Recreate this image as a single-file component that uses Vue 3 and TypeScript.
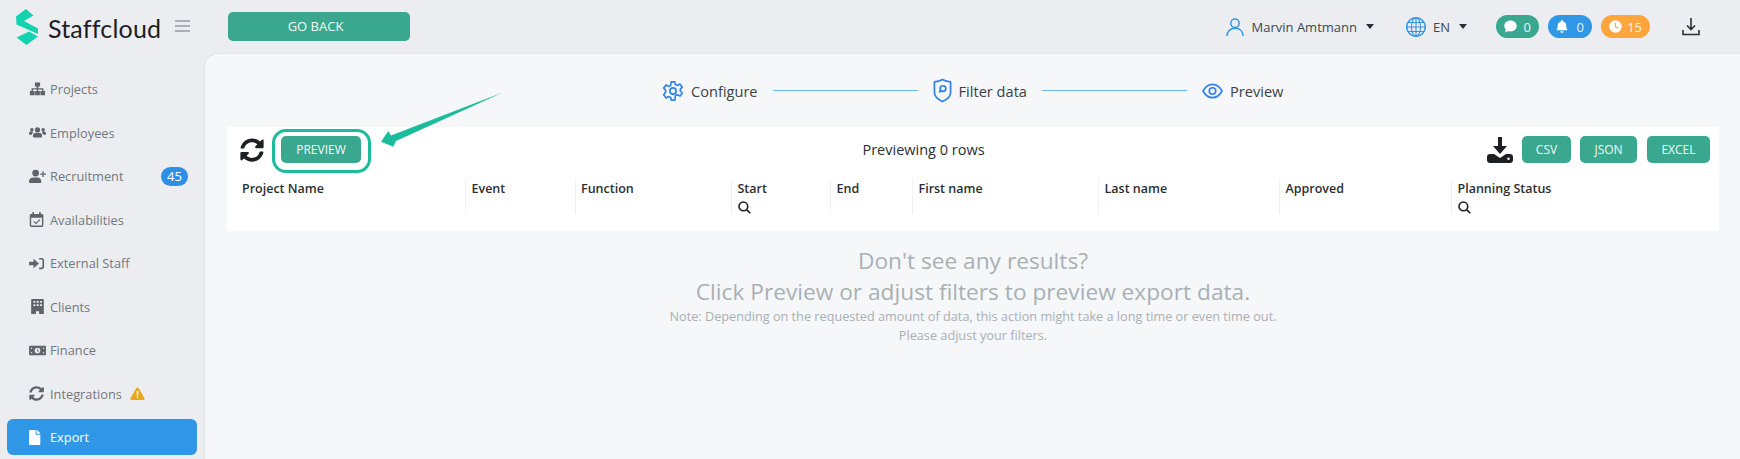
<script setup lang="ts">
interface NavItem {
  label: string;
  path: string;
  active?: boolean;
}

const syncPath =
  "M370.72 133.28C339.458 104.008 298.888 87.962 255.848 88c-77.458.068-144.328 53.178-162.791 126.85-1.344 5.363-6.122 9.15-11.651 9.15H24.103c-7.498 0-13.194-6.807-11.807-14.176C33.933 94.924 134.813 8 256 8c66.448 0 126.791 26.136 171.315 68.685L463.03 40.97C478.149 25.851 504 36.559 504 57.941V192c0 13.255-10.745 24-24 24H345.941c-21.382 0-32.09-25.851-16.971-40.971l41.75-41.749zM32 296h134.059c21.382 0 32.09 25.851 16.971 40.971l-41.75 41.75c31.262 29.273 71.835 45.319 114.876 45.28 77.418-.07 144.315-53.144 162.787-126.849 1.344-5.363 6.122-9.15 11.651-9.15h57.304c7.498 0 13.194 6.807 11.807 14.176C478.067 417.076 377.187 504 256 504c-66.448 0-126.791-26.136-171.315-68.685L48.97 471.03C33.851 486.149 8 475.441 8 454.059V320c0-13.255 10.745-24 24-24z";

const navItems: NavItem[] = [
  { label: "Projects", path: "M200 20h176v130h-58v66h172v90h56v146H386V306h60v-46H310v46h60v146H206V306h60v-46H130v46h60v146H28V306h56v-90h172v-66h-56z" },
  { label: "Employees", path: "M96 224a60 60 0 1 1 0-120 60 60 0 0 1 0 120zm384 0a60 60 0 1 1 0-120 60 60 0 0 1 0 120zM288 256a88 88 0 1 1 0-176 88 88 0 0 1 0 176zM140 244c-28 22-44 52-48 92H20c-12 0-20-8-20-20v-36c0-34 26-62 60-62h44c14 0 26 8 36 26zm296 0c10-18 22-26 36-26h44c34 0 60 28 60 62v36c0 12-8 20-20 20h-72c-4-40-20-70-48-92zM210 276h156c44 0 76 32 76 74v42c0 20-16 36-36 36H170c-20 0-36-16-36-36v-42c0-42 32-74 76-74z" },
  { label: "Recruitment", path: "M224 256a116 116 0 1 1 0-232 116 116 0 0 1 0 232zm-60 32h120c76 0 132 58 132 132v28c0 18-14 32-32 32H32c-18 0-32-14-32-32v-28c0-74 56-132 164-132zM500 150h76v44h-76v76h-44v-76h-76v-44h76V74h44z" },
  { label: "Availabilities", path: "M112 0h56v64h176V0h56v64h40c26 0 48 22 48 48v352c0 26-22 48-48 48H72c-26 0-48-22-48-48V112c0-26 22-48 48-48h40zM72 192v272h368V192zm284 52 28 28-150 148-86-86 28-28 58 58z" },
  { label: "External Staff", path: "M344 64h88c44 0 80 36 80 80v224c0 44-36 80-80 80h-88v-56h88c14 0 24-10 24-24V144c0-14-10-24-24-24h-88zM16 200h136V96l184 160-184 160V312H16c-9 0-16-7-16-16v-80c0-9 7-16 16-16z" },
  { label: "Clients", path: "M104 0h368c18 0 32 14 32 32v480H344v-96h-112v96H72V32c0-18 14-32 32-32zm48 64v64h64V64zm112 0v64h64V64zm112 0v64h64V64zM152 176v64h64v-64zm112 0v64h64v-64zm112 0v64h64v-64z" },
  { label: "Finance", path: "M24 96h528c13 0 24 11 24 24v272c0 13-11 24-24 24H24c-13 0-24-11-24-24V120c0-13 11-24 24-24zm264 64a96 96 0 1 0 0 192 96 96 0 0 0 0-192zm-12 40h24v64h40v24h-64zM64 160v48c26 0 48-22 48-48zm400 0c0 26 22 48 48 48v-48zM64 304v48h48c0-26-22-48-48-48zm448 0c-26 0-48 22-48 48h48z" },
  { label: "Integrations", path: syncPath },
  { label: "Export", active: true, path: "M224 0v136c0 13 11 24 24 24h136v328c0 13-11 24-24 24H24c-13 0-24-11-24-24V24C0 11 11 0 24 0zm160 122v6H256V0h6c6 0 12 3 17 7l98 98c4 5 7 11 7 17z" },
];

const columns = [
  { label: "Project Name" },
  { label: "Event" },
  { label: "Function" },
  { label: "Start", search: true },
  { label: "End" },
  { label: "First name" },
  { label: "Last name" },
  { label: "Approved" },
  { label: "Planning Status", search: true },
];
</script>

<template>
  <div class="app">
    <header class="topbar">
      <div class="brand">
        <svg class="logo" viewBox="0 0 22 36" width="22" height="36">
          <path d="M0 7.500 10 0l7.500 6.500L8 12l14 7.500V25L.5 15.500z" fill="#12d3ae" />
          <path d="M.5 28.500 13 22.500l9 5L10.500 36z" fill="#12d3ae" />
        </svg>
        <span class="brand-name">Staffcloud</span>
        <span class="burger"><i></i><i></i><i></i></span>
      </div>
      <button class="btn go-back">GO BACK</button>

      <div class="top-right">
        <svg class="user-icon" viewBox="0 0 18 18" width="18" height="18" fill="none" stroke="#2f97e6" stroke-width="1.5">
          <circle cx="9" cy="5.200" r="4.200" />
          <path d="M1 18c0-4.500 3-7.800 8-7.800s8 3.300 8 7.800" />
        </svg>
        <span class="top-label user-name">Marvin Amtmann</span>
        <span class="caret"></span>
        <svg class="globe" viewBox="0 0 20 20" width="20" height="20" fill="none" stroke="#2f97e6" stroke-width="1.1">
          <circle cx="10" cy="10" r="9.300" stroke-width="1.500" />
          <ellipse cx="10" cy="10" rx="4.500" ry="9.300" />
          <path d="M10 1v18M1 10h18M2 5.500h16M2 14.500h16" />
        </svg>
        <span class="top-label lang">EN</span>
        <span class="caret"></span>

        <span class="pill pill-green">
          <svg viewBox="0 0 12 12" width="13" height="13"><path d="M6 .5c3.200 0 5.700 2.200 5.700 5s-2.500 5-5.700 5c-.8 0-1.500-.1-2.200-.4L1 11.500l.7-2.600C.8 8 .3 6.800.3 5.500c0-2.800 2.500-5 5.700-5z" fill="#fff" /></svg>
          0
        </span>
        <span class="pill pill-blue">
          <svg viewBox="0 0 12 13" width="12" height="13"><path d="M6 0c.6 0 1 .4 1 1v.6c2 .4 3.300 2 3.300 4 0 3 .7 3.900 1.400 4.700H.3C1 9.500 1.700 8.600 1.700 5.600c0-2 1.300-3.600 3.300-4V1c0-.6.400-1 1-1zM4.400 11.200h3.200c0 1-.7 1.700-1.600 1.700s-1.600-.7-1.600-1.700z" fill="#fff" /></svg>
          0
        </span>
        <span class="pill pill-orange">
          <svg viewBox="0 0 13 13" width="13" height="13"><circle cx="6.500" cy="6.500" r="6.200" fill="#fff" /><path d="M6.500 3v3.800l2.500 1.400" fill="none" stroke="#ffa53d" stroke-width="1.200" /></svg>
          15
        </span>

        <svg class="top-download" viewBox="0 0 18 18" width="18" height="18" fill="none" stroke="#2b2f33" stroke-width="1.600">
          <path d="M9 0v11M5 7.500l4 4 4-4M1 12v4.500h16V12" />
        </svg>
      </div>
    </header>

    <div class="layout">
      <nav class="sidebar">
        <a v-for="item in navItems" :key="item.label" class="nav-item" :class="{ active: item.active }">
          <span class="nav-icon">
            <svg viewBox="0 0 576 512" width="17" height="15" fill="currentColor"><path :d="item.path" /></svg>
          </span>
          <span>{{ item.label }}</span>
          <span v-if="item.label === 'Recruitment'" class="count">45</span>
          <svg v-if="item.label === 'Integrations'" class="warn" viewBox="0 0 16 14" width="15" height="13">
            <path d="M8 .5c.5 0 .9.300 1.200.7l6.400 10.900c.5.900-.1 1.900-1.200 1.900H1.600c-1.100 0-1.700-1-1.200-1.900L6.800 1.200C7.100.8 7.500.5 8 .5z" fill="#e9a820" />
            <rect x="7.200" y="4.300" width="1.600" height="5" fill="#fff" />
            <rect x="7.200" y="10.200" width="1.600" height="1.600" fill="#fff" />
          </svg>
        </a>
      </nav>

      <main class="main">
        <div class="stepper">
          <svg viewBox="0 0 24 24" width="22" height="24" fill="none" stroke="#2f80ed" stroke-width="1.800" stroke-linejoin="round">
            <circle cx="12" cy="12" r="3.400" />
            <path d="M10 2h4l.6 3 2.300 1 2.600-1.600 2.700 3.400-2.200 2.200v2l2.200 2.200-2.700 3.400-2.600-1.600-2.300 1L14 22h-4l-.6-3-2.300-1-2.600 1.600-2.700-3.400L4 13v-2L1.800 8.800l2.700-3.400L7.100 7l2.300-1z" />
          </svg>
          <span class="step-label">Configure</span>
          <span class="step-line"></span>
          <svg viewBox="0 0 20 26" width="19" height="25" fill="none" stroke="#2f80ed" stroke-width="1.800" stroke-linejoin="round">
            <path d="M10 1.500c2.500 1.500 5.500 2.300 8.500 2.500v11c0 4-4 7.500-8.500 9.500-4.500-2-8.500-5.500-8.500-9.500V4c3-.2 6-1 8.500-2.500z" />
            <circle cx="10.500" cy="11" r="3" />
            <path d="M8.300 13.200 6.500 15" />
          </svg>
          <span class="step-label">Filter data</span>
          <span class="step-line"></span>
          <svg viewBox="0 0 22 16" width="21" height="16" fill="none" stroke="#2f80ed" stroke-width="1.700">
            <path d="M1 8c2.500-4.500 6-7 10-7s7.500 2.500 10 7c-2.500 4.500-6 7-10 7S3.500 12.500 1 8z" />
            <circle cx="11" cy="8" r="3.400" />
          </svg>
          <span class="step-label">Preview</span>
        </div>

        <section class="card">
          <div class="toolbar">
            <div class="toolbar-left">
              <svg viewBox="0 0 512 512" width="24" height="24" fill="#1d1f22"><path :d="syncPath" /></svg>
              <button class="btn action preview-btn">PREVIEW</button>
            </div>
            <span class="row-count">Previewing 0 rows</span>
            <div class="toolbar-right">
              <svg class="export-icon" viewBox="0 0 26 26" width="26" height="26" fill="#1d1f22">
                <path d="M11 0h4v9h5l-7 8-7-8h5z" />
                <path d="M0 20c0-1.700 1.300-3 3-3h4l6 4 6-4h4c1.700 0 3 1.300 3 3v3c0 1.700-1.300 3-3 3H3c-1.700 0-3-1.300-3-3z" />
                <circle cx="21.500" cy="21.800" r="1.200" fill="#fff" />
              </svg>
              <button class="btn action csv">CSV</button>
              <button class="btn action json">JSON</button>
              <button class="btn action excel">EXCEL</button>
            </div>
          </div>

          <div class="table-head">
            <div v-for="col in columns" :key="col.label" class="th">
              <span class="th-label">{{ col.label }}</span>
              <svg v-if="col.search" class="th-search" viewBox="0 0 14 14" width="13" height="13" fill="none" stroke="#1d1f22" stroke-width="1.700">
                <circle cx="5.800" cy="5.800" r="4.700" />
                <path d="M9.300 9.300 13.200 13.200" />
              </svg>
            </div>
          </div>
        </section>

        <div class="empty">
          <p class="empty-title">Don't see any results?</p>
          <p class="empty-title">Click Preview or adjust filters to preview export data.</p>
          <p class="empty-note">Note: Depending on the requested amount of data, this action might take a long time or even time out.</p>
          <p class="empty-note">Please adjust your filters.</p>
        </div>

        <!-- annotation drawn over the screenshot -->
        <div class="highlight"></div>
        <svg class="arrow" viewBox="0 0 124 56" width="124" height="56">
          <path d="M122.300.3 15 49l-2.700 5.700L0 49.700 7.300 39l2.700 4.500z" fill="#1abc9c" />
        </svg>
      </main>
    </div>
  </div>
</template>

<style scoped>
.app {
  width: 1740px;
  height: 459px;
  overflow: hidden;
  display: flex;
  flex-direction: column;
  background: #ebedf1;
  font-family: "Open Sans", "Noto Sans", sans-serif;
  color: #2b2f33;
}

.topbar {
  height: 53px;
  flex: none;
  display: flex;
  align-items: center;
}

.brand {
  width: 228px;
  flex: none;
  display: flex;
  align-items: center;
  padding-left: 16px;
  box-sizing: border-box;
}

.logo {
  flex: none;
}

.brand-name {
  margin-left: 10px;
  font-family: Lato, "Open Sans", sans-serif;
  font-size: 25px;
  letter-spacing: 0.2px;
  color: #1d1f22;
  position: relative;
  top: 1px;
}

.burger {
  margin-left: 14px;
  margin-top: -1px;
  display: flex;
  flex-direction: column;
  gap: 3px;
}

.burger i {
  display: block;
  width: 15px;
  height: 2px;
  background: #a9afb3;
}

.btn {
  border: 0;
  border-radius: 5px;
  background: #3aa78f;
  color: #f2fbf8;
  font-family: inherit;
  font-size: 12px;
  padding: 0;
}

.go-back {
  width: 182px;
  height: 29px;
  margin-top: -1px;
  padding-right: 7px;
  font-size: 13px;
}

.top-right {
  margin-left: auto;
  display: flex;
  align-items: center;
  padding-right: 40px;
}

.top-label {
  font-size: 13px;
  color: #44484d;
}

.user-name {
  margin-left: 8px;
}

.caret {
  width: 0;
  height: 0;
  margin-left: 9px;
  border-left: 4.500px solid transparent;
  border-right: 4.500px solid transparent;
  border-top: 5px solid #2b2f33;
}

.globe {
  margin-left: 32px;
}

.lang {
  margin-left: 7px;
}

.pill {
  height: 23px;
  border-radius: 12px;
  display: flex;
  align-items: center;
  justify-content: space-between;
  padding: 0 8px;
  box-sizing: border-box;
  font-size: 13px;
  color: #eaf6f3;
}

.pill-green {
  width: 43px;
  margin-left: 29px;
  background: #3aa78f;
}

.pill-blue {
  width: 44px;
  margin-left: 9px;
  background: #2f97e6;
}

.pill-orange {
  width: 49px;
  margin-left: 9px;
  background: #ffa53d;
}

.top-download {
  margin-left: 32px;
}

.layout {
  flex: 1;
  min-height: 0;
  display: flex;
}

.sidebar {
  width: 204px;
  flex: none;
  padding: 18px 7px 0;
  box-sizing: border-box;
  display: flex;
  flex-direction: column;
  gap: 7.500px;
}

.nav-item {
  height: 36px;
  flex: none;
  display: flex;
  align-items: center;
  padding-left: 22px;
  border-radius: 6px;
  font-size: 12.800px;
  color: #73787d;
}

.nav-item.active {
  background: #2f97e6;
  color: #fff;
}

.nav-icon {
  width: 21px;
  flex: none;
  display: flex;
  color: #5f6468;
}

.active .nav-icon {
  color: #fff;
}

.count {
  margin-left: auto;
  margin-right: 9px;
  width: 27px;
  height: 19px;
  border-radius: 10px;
  background: #2f8fe6;
  color: #fff;
  font-size: 13px;
  line-height: 19px;
  text-align: center;
}

.warn {
  margin-left: 8px;
}

.main {
  flex: 1;
  min-width: 0;
  position: relative;
  background: #f5f7f9;
  border-top: 1px solid #e1e3e6;
  border-left: 1px solid #e1e3e6;
  border-top-left-radius: 14px;
  padding: 0 21px 0 22px;
}

.stepper {
  height: 73px;
  display: flex;
  align-items: center;
  padding-left: 435px;
  box-sizing: border-box;
}

.step-label {
  margin-left: 7px;
  font-size: 14.600px;
  color: #3d4146;
}

.step-line {
  width: 145px;
  height: 1px;
  margin: 0 15px;
  background: #6db6ee;
}

.card {
  height: 104px;
  background: #fff;
  padding: 0 9px 0 8px;
}

.toolbar {
  height: 45px;
  display: grid;
  grid-template-columns: 1fr auto 1fr;
  align-items: center;
}

.toolbar-left {
  display: flex;
  align-items: center;
  padding-left: 5px;
}

.action {
  height: 27px;
}

.preview-btn {
  width: 80px;
  margin-left: 17px;
}

.row-count {
  font-size: 14.500px;
  color: #2b2f33;
  margin-right: 98px;
}

.toolbar-right {
  display: flex;
  align-items: center;
  justify-content: flex-end;
}

.export-icon {
  margin-right: 9px;
}

.csv {
  width: 49px;
}

.json {
  width: 57px;
  margin-left: 9px;
}

.excel {
  width: 63px;
  margin-left: 10px;
}

.table-head {
  display: grid;
  grid-template-columns: 230px 109.500px 156.500px 99px 82px 186px 181px 172px 1fr;
  padding-top: 7px;
}

.th {
  display: flex;
  flex-direction: column;
  align-items: flex-start;
  padding-left: 5.500px;
  min-height: 28px;
  border-left: 1px solid #eef0f2;
  font-size: 12.500px;
  font-weight: 600;
  line-height: 20px;
  color: #2b2f33;
}

.th:first-child {
  padding-left: 7px;
  border-left: 0;
}

.th-search {
  margin-top: 2px;
}

.empty {
  padding-top: 14px;
  text-align: center;
  color: #a9b0b5;
}

.empty p {
  margin: 0;
}

.empty-title {
  font-size: 22.700px;
  line-height: 31px;
}

.empty-note {
  font-size: 12.700px;
  line-height: 19px;
}

.highlight {
  position: absolute;
  left: 67px;
  top: 75px;
  width: 99px;
  height: 44px;
  box-sizing: border-box;
  border: 3.500px solid #1abc9c;
  border-radius: 14px;
}

.arrow {
  position: absolute;
  left: 176px;
  top: 38px;
}
</style>
